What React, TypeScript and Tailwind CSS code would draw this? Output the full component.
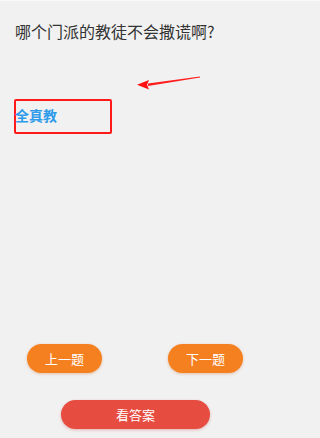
import React from "react";

export default function App() {
  return (
    <div
      className="relative flex h-[438px] w-full flex-col overflow-hidden bg-[#f1f1f1]"
      style={{ fontFamily: '"Noto Sans CJK SC", "Noto Sans", sans-serif' }}
    >
      <div className="h-[1px] bg-[#fafafa]" />
      <div className="px-[15px] pt-[19px] text-[16px] leading-[22px] text-[#333333]">
        哪个门派的教徒不会撒谎啊?
      </div>

      <div className="mt-[57px] ml-[14px] h-[35px] w-[98px] rounded-[2px] border-2 border-[#ff1a1a]">
        <div className="-ml-[1px] pt-[4px] text-[14px] font-bold leading-[20px] text-[#2f9bea]">全真教</div>
      </div>

      <div className="flex-1" />

      <div className="flex w-[270px] justify-between px-[27px]">
        <button className="h-[29px] w-[75px] rounded-full bg-[#f5801f] text-[13px] text-white shadow-[0_1px_3px_rgba(200,100,30,0.35)]">
          上一题
        </button>
        <button className="h-[29px] w-[75px] rounded-full bg-[#f5801f] text-[13px] text-white shadow-[0_1px_3px_rgba(200,100,30,0.35)]">
          下一题
        </button>
      </div>

      <div className="mt-[27px] mb-[9px] flex w-[270px] justify-center">
        <button className="ml-[1px] h-[29px] w-[149px] rounded-full bg-[#e74c41] text-[13px] text-white shadow-[0_1px_3px_rgba(200,60,50,0.35)]">
          看答案
        </button>
      </div>

      <svg
        className="absolute left-[134px] top-[72px]"
        width="70"
        height="20"
        viewBox="0 0 70 20"
      >
        <polygon points="66,4.6 14,11.5 14,14 66,5.4" fill="#ff1010" opacity="0.95" />
        <polygon points="3,12.8 15,8 13,12.8 15,17.5" fill="#ff1010" />
      </svg>
    </div>
  );
}
